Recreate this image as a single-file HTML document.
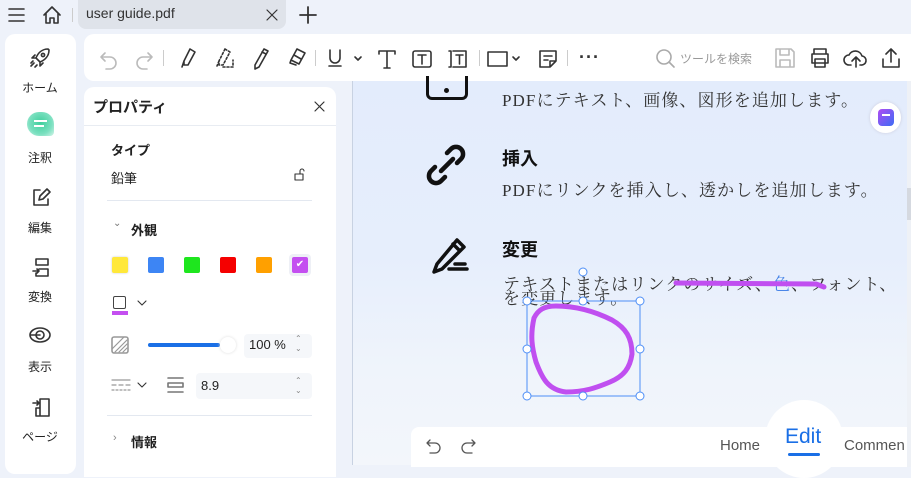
<!DOCTYPE html>
<html><head><meta charset="utf-8"><style>
*{margin:0;padding:0;box-sizing:border-box}
body{width:911px;height:465px;overflow:hidden;background:#eef2fa;font-family:"Liberation Sans","Noto Sans CJK JP",sans-serif;position:relative;color:#222}
.a{position:absolute}
.serif{font-family:"Liberation Serif","Noto Serif CJK SC",serif;letter-spacing:1.1px}
svg{position:absolute;fill:none;stroke:#333;stroke-width:1.6;stroke-linecap:round;stroke-linejoin:round}
.side{font-size:12px;color:#222;text-align:center;width:70px;left:5px}
</style></head><body>
<svg style="left:7px;top:6px" width="20" height="18"><path d="M2 3h15M2 9h15M2 15h15"/></svg>
<svg style="left:41px;top:4px" width="22" height="22"><path d="M3 11L11 3l8 8M5 9v10h4v-5h4v5h4V9"/></svg>
<div class="a" style="left:72px;top:8px;width:1px;height:14px;background:#ccc"></div>
<div class="a" style="left:78px;top:0;width:208px;height:29px;background:#dfe3ea;border-radius:0 0 8px 8px"></div>
<div class="a" style="left:86px;top:5px;font-size:14px;color:#333">user guide.pdf</div>
<svg style="left:265px;top:8px" width="14" height="14"><path d="M2 2l10 10M12 2L2 12" stroke-width="1.2"/></svg>
<svg style="left:297px;top:4px" width="22" height="22"><path d="M11 3v16M3 11h16" stroke-width="1.8"/></svg>
<div class="a" style="left:5px;top:34px;width:71px;height:440px;background:#fff;border-radius:10px"></div>
<svg style="left:28px;top:46px" width="24" height="24"><path d="M20 3c-6 0-10 4-12 9l4 4c5-2 9-6 9-12zM8 12l-4 0 3-3M12 16v4l3-3M6 17l-3 3M5 15l-2 2M9 19l-2 2"/><circle cx="15" cy="9" r="1.6"/></svg>
<div class="a side" style="top:79px">ホーム</div>
<div class="a" style="left:27px;top:112px;width:27px;height:24px;border-radius:12px 12px 4px 12px;background:radial-gradient(circle at 50% 45%,#3fcf9c,#7be0c0 60%,#d6f5ea);"></div>
<div class="a" style="left:34px;top:120px;width:13px;height:2px;background:#fff"></div><div class="a" style="left:34px;top:125px;width:10px;height:2px;background:#fff"></div>
<div class="a side" style="top:149px">注釈</div>
<svg style="left:30px;top:187px" width="22" height="22"><path d="M10 3H4v15h14v-6M9 13l1-4 7-7 3 3-7 7z"/></svg>
<div class="a side" style="top:219px">編集</div>
<svg style="left:30px;top:256px" width="22" height="22"><path d="M6 3h12v6H6zM9 13h9v7H6v-3M3 15h6l-2-2M9 15l-2 2"/></svg>
<div class="a side" style="top:288px">変換</div>
<svg style="left:28px;top:325px" width="24" height="20"><ellipse cx="12" cy="10" rx="10" ry="7"/><circle cx="12" cy="10" r="4"/><path d="M3 10h9"/></svg>
<div class="a side" style="top:358px">表示</div>
<svg style="left:30px;top:396px" width="22" height="22"><path d="M10 3h9v17H6v-8h4zM10 3v17M3 7h6l-2-2M9 7L7 9"/></svg>
<div class="a side" style="top:428px">ページ</div>
<div class="a" style="left:84px;top:34px;width:830px;height:47px;background:#fff;border-radius:10px 0 0 10px"></div>
<svg style="left:98px;top:48px" width="22" height="22"><path d="M7 5L3 9l4 4M3 9h9a6 6 0 010 12H8" stroke="#bbb"/></svg>
<svg style="left:133px;top:48px" width="22" height="22"><path d="M15 5l4 4-4 4M19 9h-9a6 6 0 000 12h4" stroke="#bbb"/></svg>
<div class="a" style="left:163px;top:50px;width:1px;height:16px;background:#ccc"></div>
<svg style="left:176px;top:46px" width="22" height="26"><path d="M14 3l5 3-7 13-4 0 0-4zM8 15l-2 6"/></svg>
<svg style="left:212px;top:46px" width="26" height="26"><path d="M13 3l5 3-7 13-4 0 0-4zM7 15l-2 5M11 21h10v-7" stroke-dasharray="2 2"/></svg>
<svg style="left:249px;top:46px" width="22" height="26"><path d="M15 3l4 2-9 16-4 2 0-4zM13 6l4 2"/></svg>
<svg style="left:285px;top:46px" width="24" height="24"><path d="M12 3l8 4-6 11-8-4zM9 9l7 4M6 14l-1 3 6 2"/></svg>
<div class="a" style="left:315px;top:50px;width:1px;height:16px;background:#ccc"></div>
<svg style="left:326px;top:47px" width="40" height="24"><path d="M4 3v8a5 5 0 0010 0V3M3 19h12M29 10l3 3 3-3" /></svg>
<svg style="left:375px;top:47px" width="24" height="24"><path d="M4 4h16M12 4v17M9 21h6M4 4v3M20 4v3"/></svg>
<svg style="left:410px;top:47px" width="24" height="24"><rect x="3" y="4" width="18" height="16" rx="2"/><path d="M8 8h8M12 8v9"/></svg>
<svg style="left:445px;top:47px" width="26" height="24"><path d="M8 4h13v16H8M4 4h2v16H4M11 8h7M14.5 8v9"/></svg>
<div class="a" style="left:479px;top:50px;width:1px;height:16px;background:#ccc"></div>
<svg style="left:486px;top:47px" width="40" height="24"><rect x="2" y="5" width="19" height="14"/><path d="M27 10l3 3 3-3"/></svg>
<svg style="left:537px;top:47px" width="22" height="24"><path d="M3 4h16v10l-6 6H3zM7 9h8M7 13h4M13 20v-6h6"/></svg>
<div class="a" style="left:567px;top:50px;width:1px;height:16px;background:#ccc"></div>
<div class="a" style="left:579px;top:47px;font-size:18px;letter-spacing:1px;color:#333;font-weight:bold">···</div>
<svg style="left:654px;top:47px" width="24" height="24"><circle cx="10" cy="10" r="7" stroke="#aaa"/><path d="M15 15l5 5" stroke="#aaa"/></svg>
<div class="a" style="left:680px;top:50px;font-size:12px;color:#999">ツールを検索</div>
<svg style="left:773px;top:46px" width="24" height="24"><path d="M3 3h15l3 3v15H3zM7 3v6h9V3M7 21v-7h10v7" stroke="#bbb"/></svg>
<svg style="left:808px;top:46px" width="24" height="24"><path d="M6 8V3h12v5M4 8h16v9H4zM7 13h10v8H7z"/></svg>
<svg style="left:843px;top:46px" width="26" height="24"><path d="M8 19H6a5 5 0 010-10 7 7 0 0113 1 4 4 0 01-1 9h-1M13 21v-9M9 15l4-4 4 4"/></svg>
<svg style="left:879px;top:46px" width="24" height="24"><path d="M12 16V3M7 8l5-5 5 5M4 13v8h16v-8"/></svg>
<div class="a" style="left:84px;top:87px;width:252px;height:390px;background:#fff;border-radius:10px 10px 0 0"></div>
<div class="a" style="left:93px;top:96px;font-size:15px;font-weight:bold">プロパティ</div>
<svg style="left:313px;top:100px" width="14" height="14"><path d="M2 2l9 9M11 2l-9 9" stroke-width="1.2"/></svg>
<div class="a" style="left:84px;top:125px;width:252px;height:1px;background:#e8ecf2"></div>
<div class="a" style="left:111px;top:140px;font-size:13px;font-weight:bold">タイプ</div>
<div class="a" style="left:111px;top:168px;font-size:13px">鉛筆</div>
<svg style="left:293px;top:168px" width="14" height="14"><path d="M2 6h8v6H2zM7 6V3a2 2 0 014 0" stroke-width="1.1"/></svg>
<div class="a" style="left:107px;top:200px;width:205px;height:1px;background:#e3e8f0"></div>
<div class="a" style="left:113px;top:218px;font-size:10px;color:#777">⌄</div>
<div class="a" style="left:131px;top:220px;font-size:13px;font-weight:bold">外観</div>
<div class="a" style="left:112px;top:257px;width:16px;height:16px;background:#ffe83a;border-radius:2px;box-shadow:0 0 2px #ccc"></div>
<div class="a" style="left:148px;top:257px;width:16px;height:16px;background:#3d85f4;border-radius:2px"></div>
<div class="a" style="left:184px;top:257px;width:16px;height:16px;background:#1ee61e;border-radius:2px"></div>
<div class="a" style="left:220px;top:257px;width:16px;height:16px;background:#f50000;border-radius:2px"></div>
<div class="a" style="left:256px;top:257px;width:16px;height:16px;background:#ffa000;border-radius:2px"></div>
<div class="a" style="left:289px;top:254px;width:22px;height:22px;background:#eef0f6;border-radius:4px"></div>
<div class="a" style="left:292px;top:257px;width:16px;height:16px;background:#c44ff0;border-radius:2px;color:#fff;font-size:10px;text-align:center;line-height:16px">✔</div>
<div class="a" style="left:113px;top:296px;width:13px;height:13px;border:1.6px solid #444;border-radius:2px"></div>
<div class="a" style="left:112px;top:311px;width:16px;height:4px;background:#c44ff0"></div>
<svg style="left:136px;top:298px" width="12" height="10"><path d="M2 3l4 4 4-4" stroke-width="1.1"/></svg>
<svg style="left:110px;top:335px" width="20" height="20"><rect x="2" y="2" width="16" height="16" rx="2" stroke="#999"/><path d="M5 17L17 5M9 17l8-8M13 17l4-4M2 14L14 2" stroke="#999" stroke-width="1.2"/></svg>
<div class="a" style="left:148px;top:343px;width:72px;height:4px;background:#1a6fe6;border-radius:2px"></div>
<div class="a" style="left:220px;top:337px;width:16px;height:16px;background:#fff;border-radius:50%;box-shadow:0 0 3px #ddd"></div>
<div class="a" style="left:244px;top:334px;width:68px;height:24px;background:#f5f7fa;border-radius:4px"></div>
<div class="a" style="left:249px;top:337px;font-size:13px">100 %</div>
<div class="a" style="left:295px;top:334px;font-size:8px;color:#888;line-height:10px">⌃<br>⌄</div>
<svg style="left:110px;top:377px" width="22" height="16"><path d="M2 3h18M2 8h4M9 8h4M16 8h4M2 13h2M6 13h2M10 13h2M14 13h2M18 13h2" stroke="#999" stroke-width="1.2"/></svg>
<svg style="left:136px;top:380px" width="12" height="10"><path d="M2 3l4 4 4-4" stroke-width="1.1"/></svg>
<svg style="left:166px;top:376px" width="20" height="18"><path d="M2 2h15M2 7h15v4H2zM2 16h15" stroke="#777" stroke-width="1.6"/></svg>
<div class="a" style="left:196px;top:373px;width:116px;height:26px;background:#f5f7fa;border-radius:4px"></div>
<div class="a" style="left:201px;top:378px;font-size:13px">8.9</div>
<div class="a" style="left:295px;top:376px;font-size:8px;color:#888;line-height:10px">⌃<br>⌄</div>
<div class="a" style="left:107px;top:415px;width:205px;height:1px;background:#e3e8f0"></div>
<div class="a" style="left:113px;top:432px;font-size:11px;color:#888">›</div>
<div class="a" style="left:131px;top:432px;font-size:13px;font-weight:bold">情報</div>
<div class="a" style="left:352px;top:81px;width:559px;height:384px;background:linear-gradient(180deg,#e3ecfc 0%,#e6eefc 45%,#eff4fb 75%,#f3f6fb 100%);border-left:1px solid #c8d2e2"></div>
<div class="a" style="left:907px;top:81px;width:4px;height:384px;background:#eef1f6"></div>
<div class="a" style="left:907px;top:188px;width:4px;height:32px;background:#d5d9e0"></div>
<div class="a" style="left:426px;top:76px;width:42px;height:24px;border:3.5px solid #111;border-top:none;border-radius:0 0 6px 6px"></div>
<div class="a" style="left:444px;top:88px;width:5px;height:5px;background:#111;border-radius:50%"></div>
<div class="a serif" style="left:502px;top:86px;font-size:17px;color:#333">PDFにテキスト、画像、図形を追加します。</div>
<div class="a" style="left:870px;top:102px;width:31px;height:31px;background:#fff;border-radius:50%;box-shadow:0 0 3px #ccd"></div>
<div class="a" style="left:878px;top:109px;width:16px;height:17px;background:linear-gradient(135deg,#b04cf2,#3b6cf5);border-radius:4px"></div>
<div class="a" style="left:882px;top:114px;width:8px;height:2px;background:#fff"></div>
<svg style="left:425px;top:143px" width="44" height="46"><path d="M22 10l4-4a7 7 0 0110 10l-4 4M20 34l-4 4A7 7 0 016 28l4-4M16 28l12-12" stroke="#111" stroke-width="4.5"/></svg>
<div class="a" style="left:502px;top:145px;font-size:18px;font-weight:bold;color:#111">挿入</div>
<div class="a serif" style="left:502px;top:176px;font-size:17px;color:#333">PDFにリンクを挿入し、透かしを追加します。</div>
<svg style="left:427px;top:236px" width="46" height="42"><path d="M30 4l7 7-22 22-8 3 3-8zM26 8l7 7" stroke="#111" stroke-width="3.5"/><path d="M22 33h18M28 28h10" stroke="#111" stroke-width="3.5"/></svg>
<div class="a" style="left:502px;top:236px;font-size:18px;font-weight:bold;color:#111">変更</div>
<div class="a serif" style="left:503px;top:270px;font-size:17px;color:#333;white-space:nowrap">テキストまたはリンクのサイズ、<span style="color:#4a86e8">色</span>、フォント、</div>
<div class="a serif" style="left:503px;top:290px;font-size:17px;color:#333;line-height:17px">を変更します。</div>
<svg style="left:520px;top:270px;overflow:visible" width="320" height="140"><path d="M156 13l140 1 8 3" stroke="#c04ff0" stroke-width="5"/>
<path d="M14 48c4-8 10-12 22-12 20 0 40 6 56 14 14 8 20 18 20 34-2 14-8 22-22 28-14 6-26 10-44 10-18-2-24-14-30-30-4-14-6-26-2-44" stroke="#c04ff0" stroke-width="5"/>
<rect x="7" y="31" width="113" height="95" stroke="#4d8ef7" stroke-width="1"/>
<g fill="#fff" stroke="#4d8ef7" stroke-width="1"><circle cx="63" cy="2" r="4"/><circle cx="7" cy="31" r="4"/><circle cx="63" cy="31" r="4"/><circle cx="120" cy="31" r="4"/><circle cx="7" cy="79" r="4"/><circle cx="120" cy="79" r="4"/><circle cx="7" cy="126" r="4"/><circle cx="63" cy="126" r="4"/><circle cx="120" cy="126" r="4"/></g></svg>
<div class="a" style="left:411px;top:427px;width:496px;height:40px;background:#fff;border-radius:8px 0 0 0"></div>
<svg style="left:424px;top:436px" width="20" height="20"><path d="M6 4L3 7l3 3M3 7h8a5 5 0 010 10H6" stroke="#555" stroke-width="1.3"/></svg>
<svg style="left:458px;top:436px" width="20" height="20"><path d="M14 4l3 3-3 3M17 7H9a5 5 0 000 10h5" stroke="#555" stroke-width="1.3"/></svg>
<div class="a" style="left:720px;top:437px;font-size:15px;color:#555">Home</div>
<div class="a" style="left:765px;top:400px;width:78px;height:78px;background:#fff;border-radius:50%"></div>
<div class="a" style="left:785px;top:425px;font-size:21px;color:#1a6fe6">Edit</div>
<div class="a" style="left:788px;top:453px;width:32px;height:3px;background:#1a6fe6;border-radius:2px"></div>
<div class="a" style="left:844px;top:437px;font-size:15px;color:#555;white-space:nowrap">Commen</div>
<div class="a" style="left:907px;top:427px;width:4px;height:40px;background:#eef1f6"></div>
</body></html>
